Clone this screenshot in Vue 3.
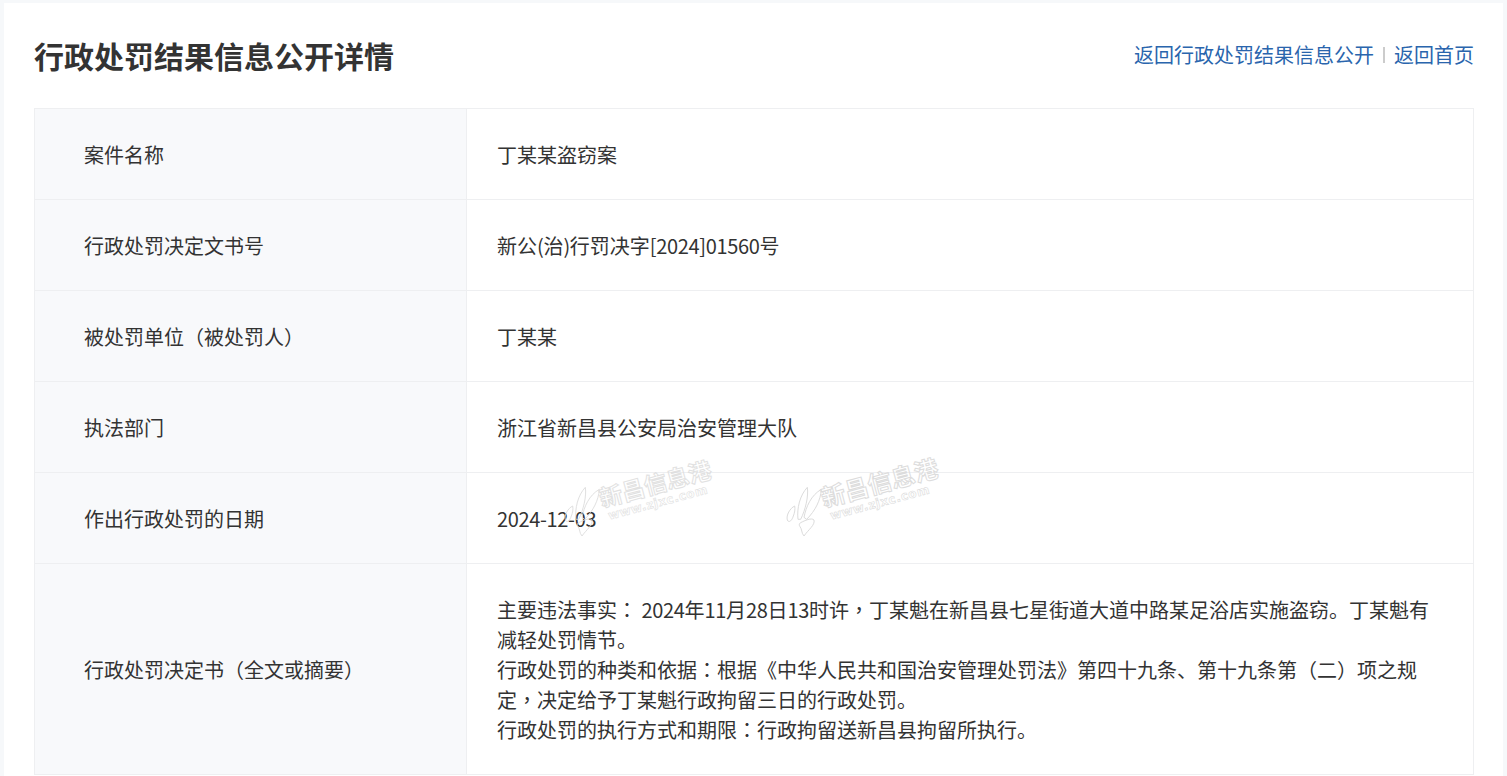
<script setup>
const rows = [
  { label: '案件名称', value: ['丁某某盗窃案'] },
  { label: '行政处罚决定文书号', value: ['新公(治)行罚决字[2024]01560号'] },
  { label: '被处罚单位（被处罚人）', value: ['丁某某'] },
  { label: '执法部门', value: ['浙江省新昌县公安局治安管理大队'] },
  { label: '作出行政处罚的日期', value: ['2024-12-03'] },
  {
    label: '行政处罚决定书（全文或摘要）',
    value: [
      '主要违法事实： 2024年11月28日13时许，丁某魁在新昌县七星街道大道中路某足浴店实施盗窃。丁某魁有减轻处罚情节。',
      '行政处罚的种类和依据：根据《中华人民共和国治安管理处罚法》第四十九条、第十九条第（二）项之规定，决定给予丁某魁行政拘留三日的行政处罚。',
      '行政处罚的执行方式和期限：行政拘留送新昌县拘留所执行。'
    ]
  }
]

// Full-width punctuation sits centred and Latin runs are tighter in the original face.
function segments(text) {
  return text.split(/([，：（）]|[0-9\-\[\]()]+)/).filter(Boolean).map((t) => ({
    t,
    c: /^[，：（）]$/.test(t) ? 'punct' : /^[0-9\-\[\]()]+$/.test(t) ? 'num' : ''
  }))
}
</script>

<template>
  <div class="page">
    <main class="card">
      <header class="head">
        <h1 class="title">行政处罚结果信息公开详情</h1>
        <nav class="links">
          <a class="link">返回行政处罚结果信息公开</a>
          <span class="sep"></span>
          <a class="link">返回首页</a>
        </nav>
      </header>
      <section class="table">
        <div v-for="r in rows" :key="r.label" class="row">
          <div class="label"><span><span v-for="(s, i) in segments(r.label)" :key="i" :class="s.c">{{ s.t }}</span></span></div>
          <div class="value">
            <p v-for="(line, i) in r.value" :key="i" class="line"><span v-for="(s, j) in segments(line)" :key="j" :class="s.c">{{ s.t }}</span></p>
          </div>
        </div>
      </section>
    </main>

    <div v-for="n in 2" :key="n" class="mark" :class="'mark' + n">
      <svg class="mark-logo" width="60" height="60" viewBox="0 0 180 180" fill="none" stroke="#dcdcdc" stroke-width="3">
        <path d="M60 118C56 85 66 45 88 22C92 50 82 90 68 118Z" />
        <path d="M78 112C84 80 100 45 130 28C128 60 112 92 86 118Z" />
        <path d="M50 78C36 85 24 105 28 120C32 130 42 122 46 108C50 98 52 88 50 78Z" />
        <path d="M68 128C80 122 100 112 108 120C112 135 90 150 78 168C70 160 72 146 66 140C62 134 64 130 68 128Z" />
      </svg>
      <div class="mark-text">
        <div class="mark-cn">新昌信息港</div>
        <div class="mark-en">www.zjxc.com</div>
      </div>
    </div>
  </div>
</template>

<style scoped>
.page {
  position: relative;
  height: 776px;
  overflow: hidden;
  background: #f6f8fa;
  padding: 3px 4px 0;
  box-sizing: border-box;
  font-family: "Noto Sans CJK SC", "Liberation Sans", sans-serif;
  color: #333;
}
.card {
  background: #fff;
  padding: 0 29px 0 30px;
  height: 800px;
}
.head {
  height: 105px;
  display: flex;
  justify-content: space-between;
  align-items: center;
}
.title {
  margin: 0 0 1px;
  font-size: 30px;
  line-height: 40px;
  font-weight: 700;
  color: #333;
}
.links {
  display: flex;
  align-items: center;
  font-size: 20px;
  line-height: 30px;
  margin-bottom: 1px;
}
.link {
  color: #2a65ad;
}
.sep {
  width: 2px;
  height: 16px;
  margin: 0 9px;
  background: #ccc;
}
.table {
  border: 1px solid #eeeff1;
  border-bottom: 0;
}
.row {
  display: flex;
  border-bottom: 1px solid #eeeff1;
}
.label {
  width: 432px;
  box-sizing: border-box;
  padding: 2px 0 0 49px;
  background: #f8f9fb;
  border-right: 1px solid #eeeff1;
  display: flex;
  align-items: center;
  font-size: 20px;
  line-height: 30px;
}
.value {
  flex: 1;
  min-height: 90px;
  box-sizing: border-box;
  padding: 31px 40px 29px 30px;
  font-size: 20px;
  line-height: 30px;
}
.line {
  margin: 0;
}
.punct {
  font-family: "Noto Sans CJK TC", sans-serif;
}
.num {
  letter-spacing: -0.35px;
}
.mark {
  position: absolute;
  top: 480px;
  display: flex;
  align-items: flex-start;
  pointer-events: none;
}
.mark1 { left: 556px; opacity: 0.85; }
.mark2 { left: 778px; }
.mark-text {
  transform: rotate(-15deg);
  transform-origin: left top;
  margin: 5px 0 0 -20px;
  color: transparent;
}
.mark-cn {
  font-size: 24px;
  line-height: 26px;
  font-weight: 700;
  -webkit-text-stroke: 1px #dcdcdc;
  white-space: nowrap;
}
.mark1 .mark-cn { font-size: 23px; }
.mark-en {
  margin-left: 4px;
  font-family: "DejaVu Sans", sans-serif;
  font-size: 12px;
  line-height: 14px;
  font-weight: 700;
  letter-spacing: 0.6px;
  -webkit-text-stroke: 0.6px #dcdcdc;
  white-space: nowrap;
}
</style>
